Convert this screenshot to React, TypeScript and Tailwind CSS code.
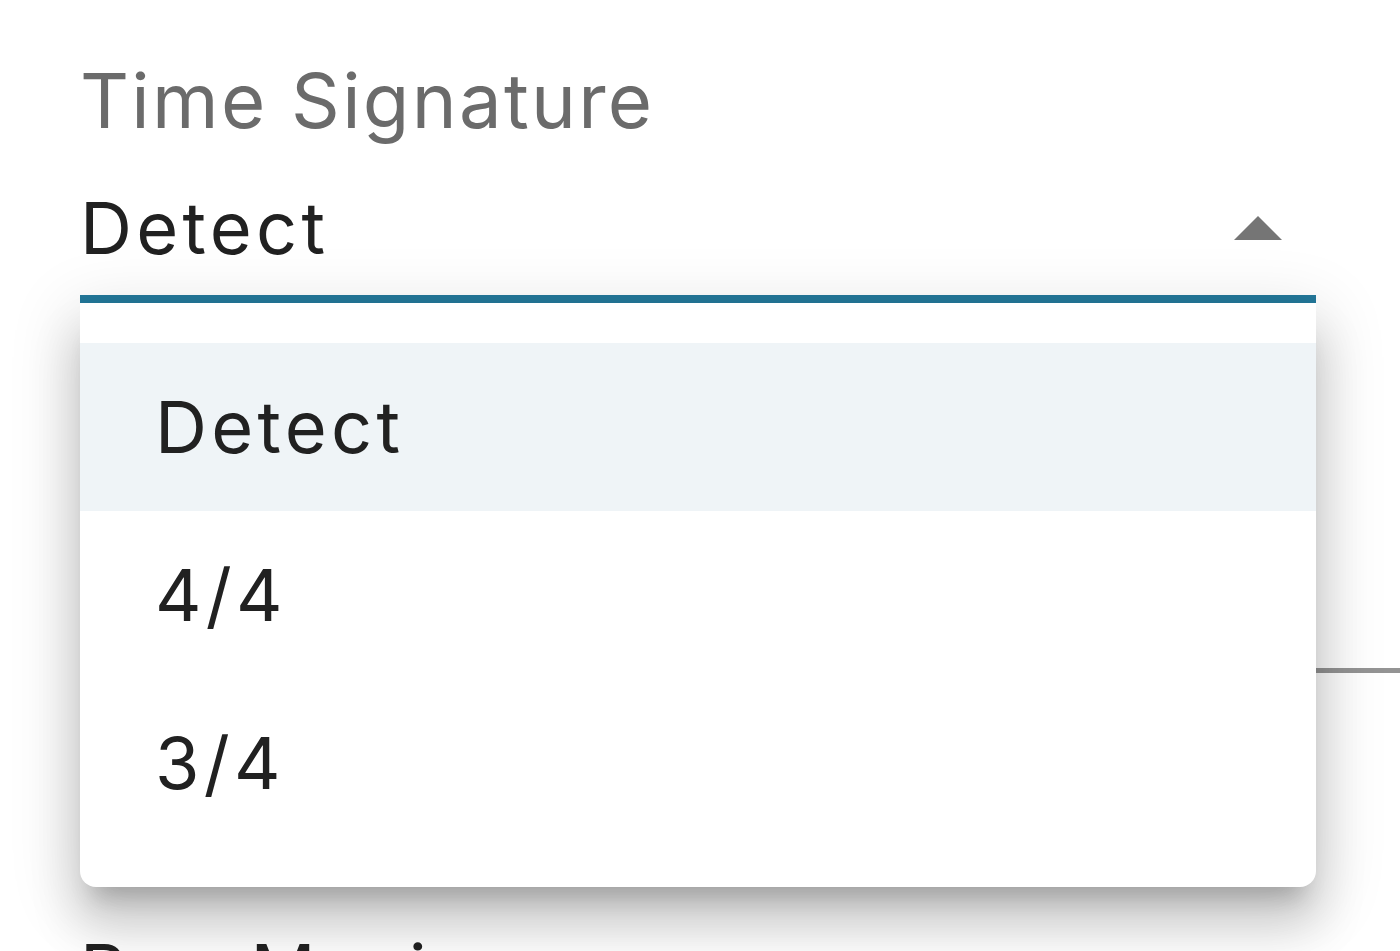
import React from "react";

const font = { fontFamily: "Inter, 'Noto Sans', 'DejaVu Sans', sans-serif" };

export default function App() {
  const items = ["Detect", "4/4", "3/4"];
  return (
    <div className="relative w-[1400px] h-[951px] overflow-hidden bg-white" style={font}>
      <div className="pl-[80px] pt-[62px]">
        <div className="w-[1236px]">
          <div className="text-[76px] leading-none tracking-[0.03em] text-[#6b6b6b]">Time Signature</div>
          <div className="mt-[54px] flex items-center justify-between h-[72px]">
            <span className="text-[72px] leading-none tracking-[0.06em] text-[#212121]">Detect</span>
            <svg width="48" height="24" viewBox="0 0 48 24" className="mr-[34px]">
              <polygon points="0,24 24,0 48,24" fill="#757575" />
            </svg>
          </div>
          <div className="mt-[31px] h-[8px] bg-[#24799b]" />
        </div>
        <div className="mt-[365px] h-[5px] w-[1320px] bg-[#949494]" />
        <div className="mt-[261px] text-[72px] leading-none tracking-[0.06em] text-[#212121]">Pop Music</div>
      </div>

      <div className="absolute left-[80px] top-[303px] w-[1236px] bg-white rounded-b-[16px] py-[40px] shadow-[0_23px_23px_-14px_rgba(0,0,0,0.2),0_38px_47px_5px_rgba(0,0,0,0.14),0_14px_66px_9px_rgba(0,0,0,0.12)]">
        {items.map((it, i) => (
          <div
            key={it}
            className={
              i === 0
                ? "h-[168px] flex items-center px-[75px] bg-[#eff4f7] text-[72px] leading-none tracking-[0.06em] text-[#212121]"
                : "h-[168px] flex items-center px-[75px] text-[72px] leading-none tracking-[0.06em] text-[#212121]"
            }
          >
            {it}
          </div>
        ))}
      </div>
    </div>
  );
}
